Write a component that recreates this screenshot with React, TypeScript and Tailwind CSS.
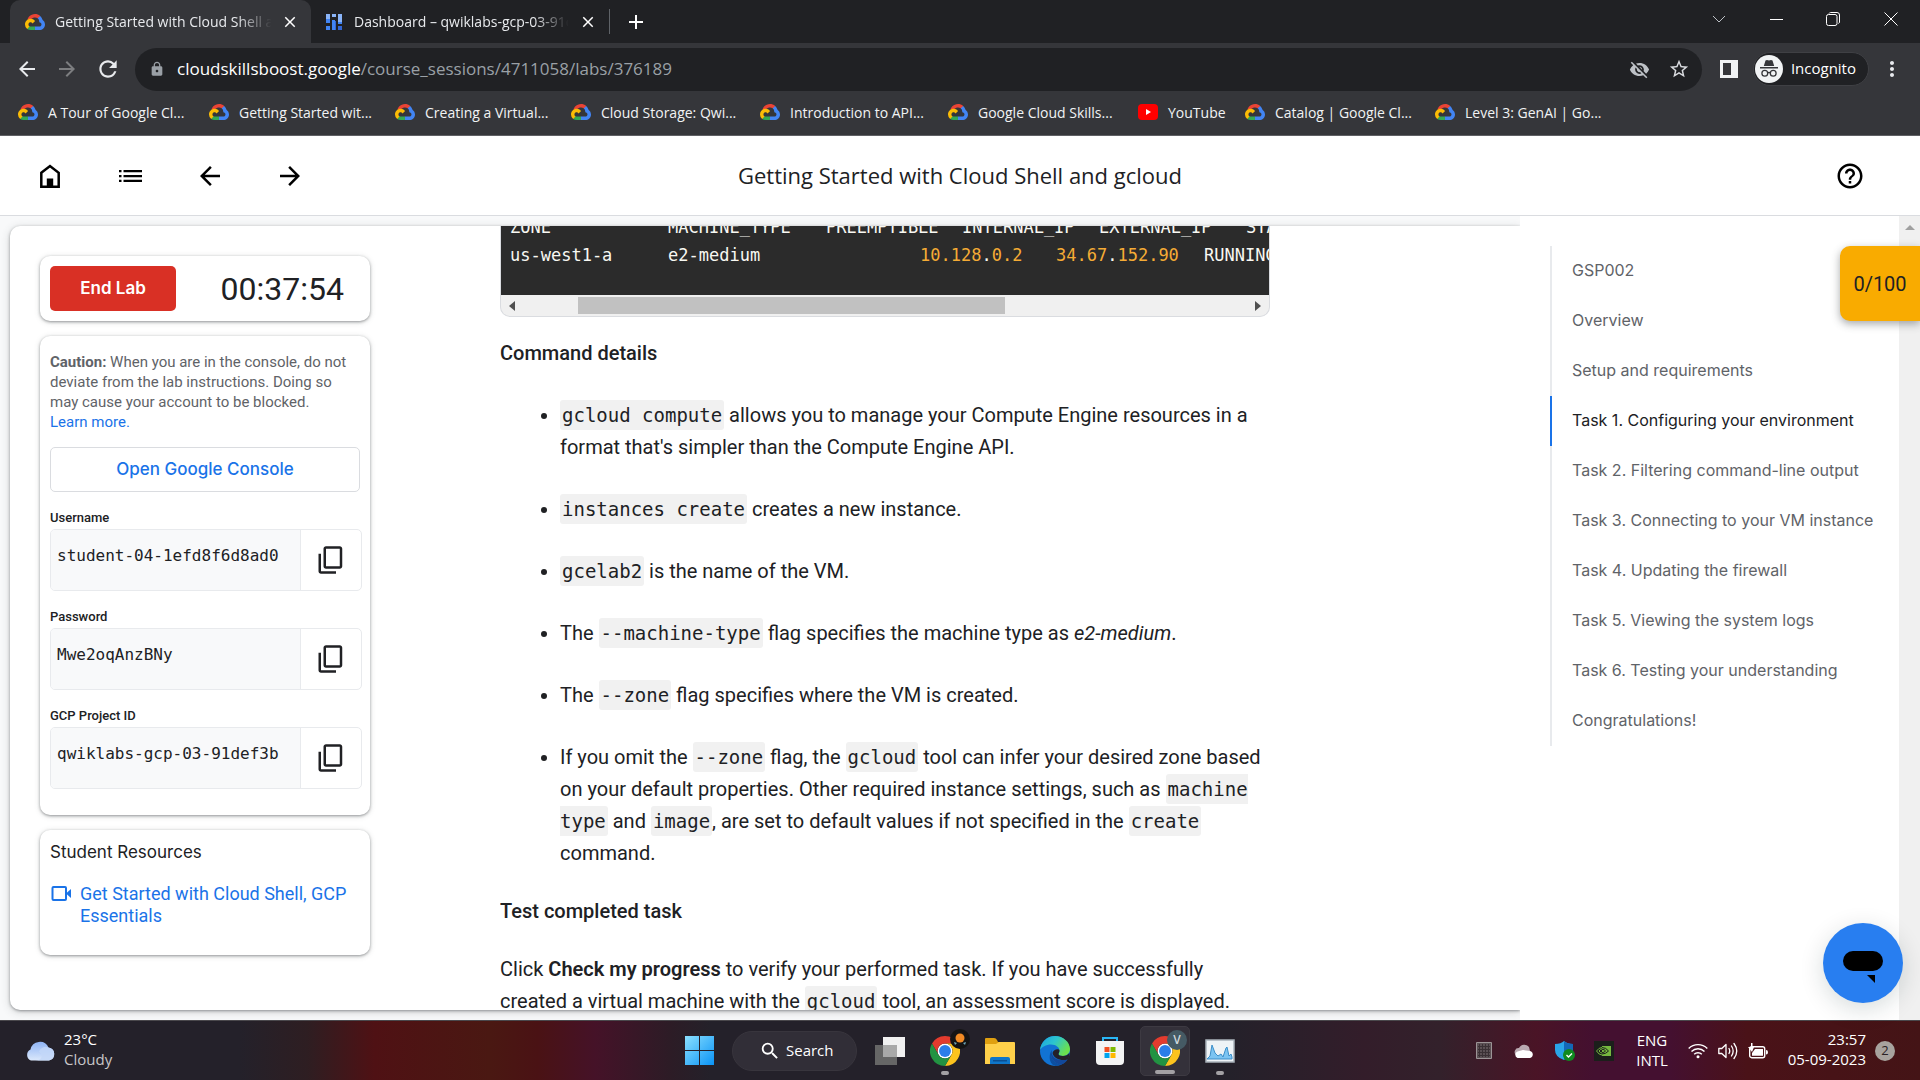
import React from "react";
import {
  MdArrowBack, MdArrowForward, MdRefresh, MdLock, MdStarBorder, MdMoreVert, MdClose, MdAdd,
  MdHelpOutline, MdContentCopy, MdVisibilityOff, MdSearch,
} from "react-icons/md";

const UI = "font-['Open_Sans','Noto_Sans',sans-serif]";
const MONO = "font-['DejaVu_Sans_Mono','Liberation_Mono',monospace]";

function CloudLogo() {
  return (
    <svg viewBox="0 0 256 206" className="h-[18px] w-5 shrink-0" aria-hidden="true">
      <path fill="#EA4335" d="M170.252 56.819l22.253-22.253 1.483-9.37C153.437-11.677 88.976-7.495 52.42 33.92 42.267 45.423 34.734 59.764 30.717 74.573l7.97-1.123 44.505-7.34 3.436-3.513c19.797-21.742 53.27-24.667 76.128-6.168l7.496.39z" />
      <path fill="#4285F4" d="M224.205 73.918a100.249 100.249 0 0 0-30.217-48.722l-31.232 31.232a55.515 55.515 0 0 1 20.379 44.037v5.544c15.35 0 27.797 12.445 27.797 27.796 0 15.352-12.446 27.485-27.797 27.485h-55.671l-5.466 5.934v33.34l5.466 5.231h55.67c39.93.311 72.553-31.494 72.864-71.424a72.303 72.303 0 0 0-31.793-60.453" />
      <path fill="#34A853" d="M71.87 205.796h55.593V161.29H71.87a27.275 27.275 0 0 1-11.47-2.5l-7.887 2.42-22.409 22.253-1.952 7.574a71.928 71.928 0 0 0 43.718 14.758" />
      <path fill="#FBBC05" d="M71.87 61.425C31.94 61.663-.238 94.228.001 134.158a72.301 72.301 0 0 0 28.151 56.88l32.248-32.247c-13.99-6.322-20.208-22.786-13.887-36.776 6.322-13.99 22.786-20.208 36.775-13.888a27.796 27.796 0 0 1 13.887 13.888l32.248-32.248A72.224 72.224 0 0 0 71.87 61.425" />
    </svg>
  );
}

function DashboardLogo() {
  return (
    <svg viewBox="0 0 16 16" className="h-4 w-4 shrink-0" aria-hidden="true">
      <path fill="#8ab4f8" d="M0 0h4v5H0zM6 0h4v3H6zM12 0h4v8h-4z" />
      <path fill="#4285f4" d="M0 5h4v4H0zM6 6h3v10H6zM12 8h4v2h-4zM0 12h4v4H0z" />
      <path fill="#3367d6" d="M12 12h4v4h-4zM9 7h1v9H9z" />
    </svg>
  );
}

function YouTubeLogo() {
  return (
    <svg viewBox="0 0 20 18" className="h-[18px] w-5 shrink-0" aria-hidden="true">
      <rect y="1" width="20" height="16" rx="4" fill="#f00" />
      <path d="M8 6l5 3-5 3z" fill="#fff" />
    </svg>
  );
}

function ChromeLogo() {
  return (
    <svg viewBox="0 0 48 48" className="h-[30px] w-[30px]" aria-hidden="true">
      <circle cx="24" cy="24" r="12" fill="#fff" />
      <path fill="#e33b2e" d="M24,12H44.7812a23.9939,23.9939,0,0,0-41.5639.0029L13.6079,30l.0093-.0024A11.9852,11.9852,0,0,1,24,12Z" />
      <path fill="#fcc31e" d="M34.3913,30.0029,24.0007,48A23.994,23.994,0,0,0,44.78,12.0031H23.9989l-.0025.0093A11.985,11.985,0,0,1,34.3913,30.0029Z" />
      <path fill="#229342" d="M13.6086,30.0031,3.218,12.006A23.994,23.994,0,0,0,24.0025,48L34.3931,30.0029l-.0067-.0068a11.9852,11.9852,0,0,1-20.7778.007Z" />
      <circle cx="24" cy="24" r="9.5" fill="#2b7de9" />
    </svg>
  );
}

function TabStrip() {
  const fade = "[mask-image:linear-gradient(to_right,black_82%,transparent_98%)]";
  return (
    <div className="flex h-[43px] items-stretch bg-[#202124] text-[#e8eaed]">
      <div className="ml-[10px] flex w-[301px] items-center rounded-t-[10px] bg-[#35363a] pl-[15px] pr-3">
        <CloudLogo />
        <span className={`ml-[10px] w-[222px] overflow-hidden whitespace-nowrap pb-px text-[14px] ${fade}`}>Getting Started with Cloud Shell and gcloud</span>
        <button aria-label="Close tab" className="ml-[5px]"><MdClose className="h-[18px] w-[18px] text-white" /></button>
      </div>
      <div className="flex w-[298px] items-center pl-[15px] pr-3">
        <DashboardLogo />
        <span className={`ml-3 w-[219px] overflow-hidden whitespace-nowrap pb-px text-[14px] ${fade}`}>Dashboard – qwiklabs-gcp-03-91def3b</span>
        <button aria-label="Close tab" className="ml-[6px]"><MdClose className="h-[18px] w-[18px] text-white" /></button>
      </div>
      <div className="my-[9px] w-px bg-[#5f6368]" />
      <button aria-label="New tab" className="ml-[14px]"><MdAdd className="h-6 w-6 text-white" /></button>
      <div className="ml-auto flex pb-[6px]">
        <button aria-label="Search tabs" className="grid w-[57px] place-items-center">
          <svg viewBox="0 0 14 14" className="h-[14px] w-[14px]" fill="none" stroke="#bdc1c6" strokeWidth="1"><path d="M1 4l6 6 6-6" /></svg>
        </button>
        <button aria-label="Minimize" className="grid w-[57px] place-items-center">
          <svg viewBox="0 0 14 14" className="h-[14px] w-[14px]" stroke="#fff" shapeRendering="crispEdges"><path d="M1 7.5h13" /></svg>
        </button>
        <button aria-label="Restore" className="grid w-[57px] place-items-center">
          <svg viewBox="0 0 14 14" className="h-[14px] w-[14px]" fill="none" stroke="#fff"><rect x=".5" y="2.5" width="10.500" height="11" rx="2" /><path d="M3 1.500a2 2 0 0 1 1.500-1H11a2.500 2.500 0 0 1 2.500 2.500v7a2 2 0 0 1-1 1.500" /></svg>
        </button>
        <button aria-label="Close window" className="grid w-[59px] place-items-center">
          <svg viewBox="0 0 14 14" className="h-[14px] w-[14px]" fill="none" stroke="#fff"><path d="M.5.5l13 13M13.500.5l-13 13" /></svg>
        </button>
      </div>
    </div>
  );
}

function Toolbar() {
  return (
    <div className="flex h-[52px] items-center bg-[#35363a] text-[#e8eaed]">
      <button aria-label="Back" className="ml-[15px]"><MdArrowBack className="h-6 w-6" /></button>
      <button aria-label="Forward" className="ml-4"><MdArrowForward className="h-6 w-6 text-[#7d7e80]" /></button>
      <button aria-label="Reload" className="ml-4"><MdRefresh className="h-[26px] w-[26px]" /></button>
      <div className="ml-[14px] flex h-[43px] flex-1 items-center rounded-full bg-[#202124] pl-[14px] pr-3">
        <MdLock className="h-4 w-4 text-[#9aa0a6]" />
        <p className="ml-3 flex-1 text-[17px] text-[#9aa0a6]"><span className="text-white">cloudskillsboost.google</span>/course_sessions/4711058/labs/376189</p>
        <button aria-label="Third-party cookies blocked"><MdVisibilityOff className="h-[21px] w-[21px] text-[#bdc1c6]" /></button>
        <button aria-label="Bookmark this tab" className="ml-[18px]"><MdStarBorder className="h-[22px] w-[22px] text-[#dadce0]" /></button>
      </div>
      <button aria-label="Side panel" className="ml-[18px]">
        <svg viewBox="0 0 18 18" className="h-[18px] w-[18px]"><path fill="#f1f3f4" fillRule="evenodd" d="M0 0h18v18H0zM3 3v12h8V3z" /></svg>
      </button>
      <button className="ml-[15px] flex h-[34px] items-center rounded-full border border-[#3f4044] bg-[#202124] pl-px pr-3">
        <svg viewBox="0 0 28 28" className="h-7 w-7" aria-hidden="true">
          <circle cx="14" cy="14" r="14" fill="#f1f3f4" />
          <path fill="#35363a" d="M10.500 5.500l1.500-.5 2 .6L16 5l1.500.5L19.200 11H8.800zM5 12h18v1.500H5z" />
          <g fill="none" stroke="#35363a" strokeWidth="1.300"><circle cx="9.800" cy="18.300" r="2.900" /><circle cx="18.200" cy="18.300" r="2.900" /><path d="M12.700 18c.8-.7 1.800-.7 2.600 0" /></g>
        </svg>
        <span className="ml-2 pb-px text-[15px] text-white">Incognito</span>
      </button>
      <button aria-label="Menu" className="ml-[11px] mr-4"><MdMoreVert className="h-6 w-6" /></button>
    </div>
  );
}

const bookmarks = [
  { text: "A Tour of Google Cl...", w: "w-[191px]" },
  { text: "Getting Started wit...", w: "w-[186px]" },
  { text: "Creating a Virtual...", w: "w-[176px]" },
  { text: "Cloud Storage: Qwi...", w: "w-[189px]" },
  { text: "Introduction to API...", w: "w-[188px]" },
  { text: "Google Cloud Skills...", w: "w-[190px]" },
  { text: "YouTube", w: "w-[107px]" },
  { text: "Catalog | Google Cl...", w: "w-[190px]" },
  { text: "Level 3: GenAI | Go...", w: "w-[190px]" },
];

function Bookmarks() {
  return (
    <nav aria-label="Bookmarks" className="flex h-[41px] items-center border-b border-[#5f6064] bg-[#35363a] pb-[6px] pl-[18px]">
      {bookmarks.map((b) => (
        <a key={b.text} href="#" className={`flex items-center gap-[10px] whitespace-nowrap text-[14px] text-[#f1f3f4] ${b.w}`}>
          {b.text === "YouTube" ? <YouTubeLogo /> : <CloudLogo />}
          {b.text}
        </a>
      ))}
    </nav>
  );
}

function LabHeader() {
  return (
    <header className="grid h-20 shrink-0 grid-cols-[1fr_auto_1fr] items-center border-b border-[#dadce0] bg-white px-[35px] text-black">
      <div className="flex gap-[50px]">
        <button aria-label="Home">
          <svg viewBox="0 0 30 30" className="h-[30px] w-[30px]"><path d="M6.300 11.800L15 5l8.700 6.800v13.900H6.300z" fill="none" stroke="#000" strokeWidth="2.500" /><path d="M11.800 17.500h6.400V26h-6.400z" /></svg>
        </button>
        <button aria-label="Lab outline">
          <svg viewBox="0 0 30 30" className="h-[30px] w-[30px]"><path d="M4 9h2.500v2.300H4zM4 13.900h2.500v2.300H4zM4 18.800h2.500v2.300H4zM8.500 9h18.500v2.300H8.500zM8.500 13.900h18.500v2.300H8.500zM8.500 18.800h18.500v2.300H8.500z" /></svg>
        </button>
        <button aria-label="Previous"><MdArrowBack className="h-[30px] w-[30px]" /></button>
        <button aria-label="Next"><MdArrowForward className="h-[30px] w-[30px]" /></button>
      </div>
      <h1 className="whitespace-nowrap text-center font-['Open_Sans',sans-serif] text-[22px] text-[#202124]">Getting Started with Cloud Shell and gcloud</h1>
      <button aria-label="Help" className="mr-5 justify-self-end"><MdHelpOutline className="h-[30px] w-[30px]" /></button>
    </header>
  );
}

const card = "rounded-[10px] bg-white px-[10px] shadow-[0_1px_3px_rgba(60,64,67,0.5),0_1px_6px_rgba(60,64,67,0.15)]";

function Credential({ id, label, value }: { id: string; label: string; value: string }) {
  return (
    <div className="mt-[15px] w-[312px]">
      <label htmlFor={id} className="block h-[22px] text-[13px] font-medium leading-[22px] text-[#202124]">{label}</label>
      <div className="flex h-[62px] overflow-hidden rounded-[5px] border border-[#e8eaed]">
        <div className="flex-1 bg-[#f8f9fa] pb-[10px] pl-[6px] pr-5">
          <input id={id} readOnly defaultValue={value} className={`h-full w-full bg-transparent text-[16px] text-[#202124] outline-none ${MONO}`} />
        </div>
        <button aria-label={`Copy ${label}`} className="grid w-[61px] place-items-center border-l border-[#e8eaed]"><MdContentCopy className="h-[30px] w-[30px] rotate-180 -scale-x-100 text-[#202124]" /></button>
      </div>
    </div>
  );
}

function Sidebar() {
  return (
    <aside className="flex w-[330px] shrink-0 flex-col gap-[15px] pt-[30px]">
      <section className={`flex h-[65px] items-center justify-between ${card}`}>
        <button className="h-[45px] w-[126px] rounded-[5px] bg-[#d93025] font-['Inter',sans-serif] text-[17px] font-semibold text-white">End Lab</button>
        <time className="mr-4 text-[32px] leading-none text-[#202124]">00:37:54</time>
      </section>
      <section className={`h-[479px] pt-4 ${card}`}>
        <p className="whitespace-nowrap text-[15px] leading-5 text-[#5f6368]">
          <b>Caution:</b> When you are in the console, do not<br />deviate from the lab instructions. Doing so<br />may cause your account to be blocked.<br />
          <a href="#" className="text-[#1a73e8]">Learn more.</a>
        </p>
        <button className="mt-[15px] h-[45px] w-full rounded-[5px] border border-[#dadce0] font-['Inter',sans-serif] text-[17px] font-medium text-[#1a73e8]">Open Google Console</button>
        <Credential id="username" label="Username" value="student-04-1efd8f6d8ad0" />
        <Credential id="password" label="Password" value="Mwe2oqAnzBNy" />
        <Credential id="project" label="GCP Project ID" value="qwiklabs-gcp-03-91def3b" />
      </section>
      <section className={`h-[125px] pt-[11px] ${card}`}>
        <h2 className="font-['Inter',sans-serif] text-[17px] leading-[22px] text-[#202124]">Student Resources</h2>
        <a href="#" className="mt-5 flex gap-2 text-[18px] leading-[22px] text-[#1a73e8]">
          <svg viewBox="0 0 22 22" className="h-[22px] w-[22px] shrink-0" aria-hidden="true"><rect x="2.500" y="4" width="13.500" height="13" rx="1" fill="none" stroke="#1a73e8" strokeWidth="2" /><path d="M16 10.500l5-4.500v9z" fill="#1a73e8" /></svg>
          <span>Get Started with Cloud Shell, GCP Essentials</span>
        </a>
      </section>
    </aside>
  );
}

function C({ children }: { children: React.ReactNode }) {
  return <code className={`rounded-[3px] bg-[#f1f1f1] px-[2px] py-1 text-[19px] leading-5 ${MONO}`}>{children}</code>;
}

function Article() {
  return (
    <article className="w-[770px] text-[20px] leading-8 text-[#202124]">
      <div className="-mt-[13px] overflow-hidden rounded-b-[10px] border border-t-0 border-[#dadce0] bg-[#f0f0f0]">
        <pre className={`overflow-hidden bg-[#2b2b2b] pb-[26px] pl-[9px] text-[17px] leading-7 text-[#f8f8f2] ${MONO}`}>
          <div className="flex"><span className="w-[158px] shrink-0">ZONE</span><span className="w-[158px] shrink-0">MACHINE_TYPE</span><span className="w-[136px] shrink-0">PREEMPTIBLE</span><span className="w-[137px] shrink-0">INTERNAL_IP</span><span className="w-[147px] shrink-0">EXTERNAL_IP</span><span>STATUS</span></div>
          <div className="flex"><span className="w-[158px] shrink-0">us-west1-a</span><span className="w-[252px] shrink-0">e2-medium</span><span className="w-[136px] shrink-0 text-[#f5ab35]">10.128<span className="text-[#f8f8f2]">.</span>0.2</span><span className="w-[148px] shrink-0 text-[#f5ab35]">34.67<span className="text-[#f8f8f2]">.</span>152.90</span><span>RUNNING</span></div>
        </pre>
        <div className="flex h-[21px] items-center px-2">
          <svg viewBox="0 0 6 10" className="h-[10px] w-[6px]" aria-hidden="true"><path d="M6 0v10L0 5z" fill="#505050" /></svg>
          <div className="ml-[63px] h-[17px] w-[427px] bg-[#c1c1c1]" />
          <svg viewBox="0 0 6 10" className="ml-auto h-[10px] w-[6px]" aria-hidden="true"><path d="M0 0v10l6-5z" fill="#505050" /></svg>
        </div>
      </div>
      <h3 className="mt-5 font-medium">Command details</h3>
      <ul className="mt-[30px] flex list-disc flex-col gap-[30px] pl-[60px]">
        <li><C>gcloud compute</C> allows you to manage your Compute Engine resources in a format that's simpler than the Compute Engine API.</li>
        <li><C>instances create</C> creates a new instance.</li>
        <li><C>gcelab2</C> is the name of the VM.</li>
        <li>The <C>--machine-type</C> flag specifies the machine type as <em>e2-medium</em>.</li>
        <li>The <C>--zone</C> flag specifies where the VM is created.</li>
        <li>If you omit the <C>--zone</C> flag, the <C>gcloud</C> tool can infer your desired zone based on your default properties. Other required instance settings, such as <C>machine type</C> and <C>image</C>, are set to default values if not specified in the <C>create</C> command.</li>
      </ul>
      <h3 className="mt-[26px] font-medium">Test completed task</h3>
      <p className="mt-[26px]">Click <b className="font-semibold">Check my progress</b> to verify your performed task. If you have successfully created a virtual machine with the <C>gcloud</C> tool, an assessment score is displayed.</p>
    </article>
  );
}

const steps = [
  "GSP002", "Overview", "Setup and requirements", "Task 1. Configuring your environment",
  "Task 2. Filtering command-line output", "Task 3. Connecting to your VM instance",
  "Task 4. Updating the firewall", "Task 5. Viewing the system logs",
  "Task 6. Testing your understanding", "Congratulations!",
];

function Outline() {
  return (
    <nav aria-label="Lab steps" className="w-[379px] shrink-0 bg-white pl-[30px] pt-[30px]">
      <ol>
        {steps.map((s, i) => (
          <li key={s} className={`flex h-[50px] items-center whitespace-nowrap border-l-2 pb-[2px] pl-5 font-['Inter',sans-serif] text-[16px] ${i === 3 ? "border-[#1a73e8] text-[#202124]" : "border-[#e8eaed] text-[#5f6368]"}`}>
            <a href="#">{s}</a>
          </li>
        ))}
      </ol>
    </nav>
  );
}

function Slot({ label, running, active, children }: { label: string; running?: boolean; active?: boolean; children: React.ReactNode }) {
  return (
    <button aria-label={label} className={`relative grid h-[50px] w-[50px] place-items-center rounded-[5px] ${active ? "border border-[#3d3a42] bg-[#34313a]" : ""}`}>
      {children}
      {running && <span className={`absolute bottom-[1px] h-1 rounded-full bg-[#a3a1a4] ${active ? "w-5" : "w-2"}`} />}
    </button>
  );
}

function Taskbar() {
  return (
    <footer className={`grid h-[60px] shrink-0 grid-cols-[1fr_auto_1fr] items-center border-t border-[#4a484c] bg-[linear-gradient(to_right,#24212a_0%,#24212a_12.500%,#2e1e22_16%,#4f1114_19.500%,#4a1812_25.500%,#4a1214_28%,#451228_31%,#2c1c26_35%,#24212a_37%,#24212a_64%,#331d2a_71%,#33212b_75%,#4a1426_80%,#441030_83%,#441030_87%,#4a1218_91%,#441416_100%)] text-white ${UI}`}>
      <button className="flex items-center gap-[9px] pl-[25px] text-left text-[15px] leading-5">
        <svg viewBox="0 0 30 20" className="h-5 w-[30px]" aria-hidden="true">
          <defs><linearGradient id="sky" x1="0" y1="0" x2="0" y2="1"><stop offset="0" stopColor="#8fb4f5" /><stop offset="1" stopColor="#dbe8fb" /></linearGradient></defs>
          <path fill="url(#sky)" d="M6 19.500a6 6 0 0 1-.5-11A9.500 9.500 0 0 1 23.500 6.500a6.600 6.600 0 0 1 .5 13z" />
          <path d="M14 10.500a7 7 0 0 1 9.500-4 6.600 6.600 0 0 1 .5 13H10c7 0 9-5 4-9z" fill="#c3d7f8" opacity=".8" />
        </svg>
        <span className="pb-[3px]"><span className="block">23°C</span><span className="block text-[#c8c6c8]">Cloudy</span></span>
      </button>
      <div className="flex items-center pr-px">
        <Slot label="Start">
          <svg viewBox="0 0 29 29" className="h-[29px] w-[29px]"><defs><linearGradient id="win" x1="0" y1="0" x2="1" y2="1"><stop offset="0" stopColor="#8be0ff" /><stop offset="1" stopColor="#0a93f5" /></linearGradient></defs><path fill="url(#win)" d="M0 0h14v14H0zM15 0h14v14H15zM0 15h14v14H0zM15 15h14v14H15z" /></svg>
        </Slot>
        <button className="mx-2 flex h-10 w-[125px] items-center gap-[5px] rounded-full border border-[#38353d] bg-[#312e37] pl-[26px] text-[15px]">
          <MdSearch className="h-[22px] w-[22px]" />Search
        </button>
        <div className="flex gap-[5px]">
          <Slot label="Task view"><svg viewBox="0 0 30 28" className="h-7 w-[30px]"><path fill="#666" d="M0 8h22v20H0z" /><path fill="#f1f1f1" d="M8 0h22v20H8z" /><path fill="#a9a9a9" d="M8 8h14v12H8z" /></svg></Slot>
          <Slot label="Chrome" running>
            <ChromeLogo />
            <svg viewBox="0 0 20 20" className="absolute right-0 top-[3px] h-5 w-5"><circle cx="10" cy="10" r="10" fill="#141414" /><circle cx="10" cy="9" r="4.500" fill="#f08a24" /><path d="M4 13l3 1-2 2zM13 14l3-1-1 3z" fill="#6fa8b8" /></svg>
          </Slot>
          <Slot label="File Explorer"><svg viewBox="0 0 30 28" className="h-7 w-[30px]"><path fill="#e0a010" d="M0 2q0-1 1-1h8q2 0 3 2l1 2h4v4H0z" /><path fill="#ffd04a" d="M0 7h11l3-2h15q1 0 1 1v21H0z" /><path fill="#0f76c9" d="M5 27v-5q0-2 2-2h16q2 0 2 2v5z" /><path fill="#0a4f93" d="M8 23h14v1.500H8z" /></svg></Slot>
          <Slot label="Edge">
            <svg viewBox="0 0 30 30" className="h-[30px] w-[30px]">
              <defs><linearGradient id="edg" x1="0" y1="0" x2="1" y2=".5"><stop offset="0" stopColor="#1ba0e0" /><stop offset=".5" stopColor="#2cc5cf" /><stop offset="1" stopColor="#6be04e" /></linearGradient></defs>
              <circle cx="15" cy="15" r="15" fill="#1173d4" />
              <path d="M0 14C1 6 7 0 15 0s15 6 15 13c0 4-3 7-7 7-3 0-4.500-1-4.500-2 0-.8 1-1.500 1-3.500 0-3-3.500-6-8.500-6C6 8.500 1.500 11 0 14z" fill="url(#edg)" />
              <path d="M12 14c-3 6 1 13 9 14.700A15 15 0 0 1 17 30C9 30 8 19 12 14z" fill="#0c4fa0" />
              <path d="M12 14c-1.500 6 4 12 15.500 9.500-1 2-3.500 4-6.500 5.200C13 27.500 9 20 12 14z" fill="#12489a" />
              <path d="M19.500 14.500c0 2-1 2.700-1 3.500 0 1 1.500 2 4.500 2 2.500 0 5-1.200 6.200-3 1 .6-.2 5.500-1.700 6.500-6 2-14-1-15-6.500.5-3 6-5 7-2.500z" fill="#24212a" />
            </svg>
          </Slot>
          <Slot label="Microsoft Store"><svg viewBox="0 0 30 30" className="h-[30px] w-[30px]"><path d="M8 6V2h14v4" fill="none" stroke="#29b6f6" strokeWidth="2" /><path fill="#f4f4f4" d="M1 5h28v20q0 4-4 4H5q-4 0-4-4z" /><path fill="#f25022" d="M9.500 11h5v5h-5z" /><path fill="#7fba00" d="M15.500 11h5v5h-5z" /><path fill="#00a4ef" d="M9.500 17h5v5h-5z" /><path fill="#ffb900" d="M15.500 17h5v5h-5z" /></svg></Slot>
          <Slot label="Chrome, profile V" running active>
            <ChromeLogo />
            <span className="absolute right-[2px] top-[3px] grid h-5 w-5 place-items-center rounded-full bg-[#455a64] text-[12px] font-semibold leading-none text-[#cfd8dc]">V</span>
          </Slot>
          <Slot label="Performance monitor" running><svg viewBox="0 0 30 24" className="h-6 w-[30px]"><path fill="#eef3f6" stroke="#a9b3ba" strokeWidth="1.500" d="M1 1h28v22H1z" /><path fill="#7cc4f2" stroke="#3c8fc9" d="M2 20l3-3 2-11 3 8 3 3 3-2 2 3 3-9 1-1 2 9 2-2 1 3v2H2z" /></svg></Slot>
        </div>
      </div>
      <div className="flex items-center justify-end pr-[25px] text-[15px] leading-5">
        <svg viewBox="0 0 16 17" className="h-[17px] w-4" aria-hidden="true"><path fill="#5b5054" stroke="#9c9496" d="M.5.5h15v16H.5z" /><path stroke="#3a3034" d="M3.500 2v13M6.500 2v13M9.500 2v13M12.500 2v13M2 4.500h12M2 7.500h12M2 10.500h12M2 13.500h12" /></svg>
        <svg viewBox="0 0 20 14" className="ml-[22px] h-[14px] w-5" aria-hidden="true"><path fill="#b9a9b0" d="M2 11a4 4 0 0 1 3-7 6 6 0 0 1 10-1l1 4z" /><path fill="#fff" d="M3.500 14a3.500 3.500 0 0 1 0-6.500L9 6l7 1a3.600 3.600 0 0 1 0 7z" /></svg>
        <svg viewBox="0 0 20 20" className="ml-[21px] h-5 w-5" aria-hidden="true"><path fill="#2aa5e8" d="M0 3q6 0 9-3 3 3 9 3v6q0 7-9 10Q0 16 0 9z" /><path fill="#1368b8" d="M9 0q3 3 9 3v6q0 7-9 10z" /><circle cx="14" cy="14" r="6" fill="#0f8a1f" /><path d="M11.500 14l2 2 3.500-3.500" fill="none" stroke="#fff" strokeWidth="1.400" /></svg>
        <svg viewBox="0 0 20 20" className="ml-[19px] h-5 w-5" aria-hidden="true"><path fill="#1b1f1b" d="M0 0h20v20H0z" /><path fill="#76b93f" d="M8 5h9v10H8z" /><path fill="none" stroke="#76b93f" d="M2.500 10Q5 6.500 8 6.500" /><path fill="none" stroke="#76b93f" d="M2.500 10Q5 14 8 14M5 10q1.500-2 3-2M5 10q1.500 2 3 2" /><path fill="none" stroke="#1b1f1b" d="M8 6.500q4 0 6.500 3.500Q12 13 8 13M8 8.300q2.500 0 3.500 1.700-1.500 1.700-3.500 1.700" /></svg>
        <span className="ml-[22px] w-[32px] pb-[2px] text-center">ENG INTL</span>
        <svg viewBox="0 0 20 16" className="ml-5 h-4 w-5" fill="none" stroke="#fff" strokeWidth="1.400" aria-hidden="true"><path d="M.7 5.500a13 13 0 0 1 18.600 0M3.500 8.500a9 9 0 0 1 13 0M6.200 11.300a5.300 5.300 0 0 1 7.600 0" /><circle cx="10" cy="13.800" r="1.500" fill="#fff" stroke="none" /></svg>
        <svg viewBox="0 0 20 18" className="ml-[10px] h-[18px] w-5" fill="none" stroke="#fff" strokeWidth="1.300" strokeLinejoin="round" strokeLinecap="round" aria-hidden="true"><path d="M.8 6.500v5h3l4.200 4V2.500l-4.200 4zM11 6.500q1.500 2.500 0 5M13.500 4q3.300 5 0 10M16 1.500q5.500 7.500 0 15" /></svg>
        <svg viewBox="0 0 20 16" className="ml-[10px] h-4 w-5" aria-hidden="true"><rect x="1.700" y="3.700" width="15" height="11" rx="2" fill="none" stroke="#fff" strokeWidth="1.400" /><path fill="#fff" d="M18 7q2 0 2 2.300T18 11.500zM4 12.700V10l3-4h8v6.700zM3 0v4H0l4 5 2-5H4.500V0z" /></svg>
        <time className="ml-4 w-[82px] whitespace-nowrap pb-[3px] text-right text-[15px]">23:57<br />05-09-2023</time>
        <span className="ml-[9px] grid h-5 w-5 place-items-center rounded-full bg-[#a8a39e] text-[13px] leading-none text-[#2a2224]">2</span>
      </div>
    </footer>
  );
}

export default function App() {
  return (
    <div className="relative flex h-screen flex-col overflow-hidden bg-white font-['Roboto',sans-serif]">
      <div className={`shrink-0 ${UI}`}>
        <TabStrip />
        <Toolbar />
        <Bookmarks />
      </div>
      <LabHeader />
      <main className="relative flex min-h-0 flex-1">
        <div className="flex min-w-0 flex-1 overflow-hidden bg-[#f8f9fa] py-[10px] pl-[10px]">
          <div className="flex flex-1 rounded-l-[10px] bg-white pl-[30px] shadow-[0_1px_3px_rgba(60,64,67,0.5),0_2px_10px_rgba(60,64,67,0.2)]">
            <Sidebar />
            <div className="ml-[130px] overflow-hidden"><Article /></div>
          </div>
        </div>
        <Outline />
        <div className="flex w-[21px] shrink-0 justify-center bg-[#f0f0f0] pt-[9px]">
          <svg viewBox="0 0 10 5" className="h-[5px] w-[10px]" aria-hidden="true"><path d="M5 0l5 5H0z" fill="#a0a0a0" /></svg>
        </div>
        <div className="absolute right-0 top-[30px] grid h-[75px] w-20 place-items-center rounded-l-[10px] bg-[#f9ab00] text-[20px] text-[#202124] shadow-[0_3px_8px_rgba(60,64,67,0.45)]">0/100</div>
        <button aria-label="Open chat" className="absolute bottom-[17px] right-[17px] h-20 w-20 rounded-full bg-[#287ef0] shadow-[0_6px_24px_rgba(0,40,40,0.16)]">
          <svg viewBox="0 0 80 80" className="h-20 w-20"><rect x="20" y="28" width="40" height="20" rx="10" /><path d="M44 52h8v8z" /></svg>
        </button>
      </main>
      <Taskbar />
    </div>
  );
}
